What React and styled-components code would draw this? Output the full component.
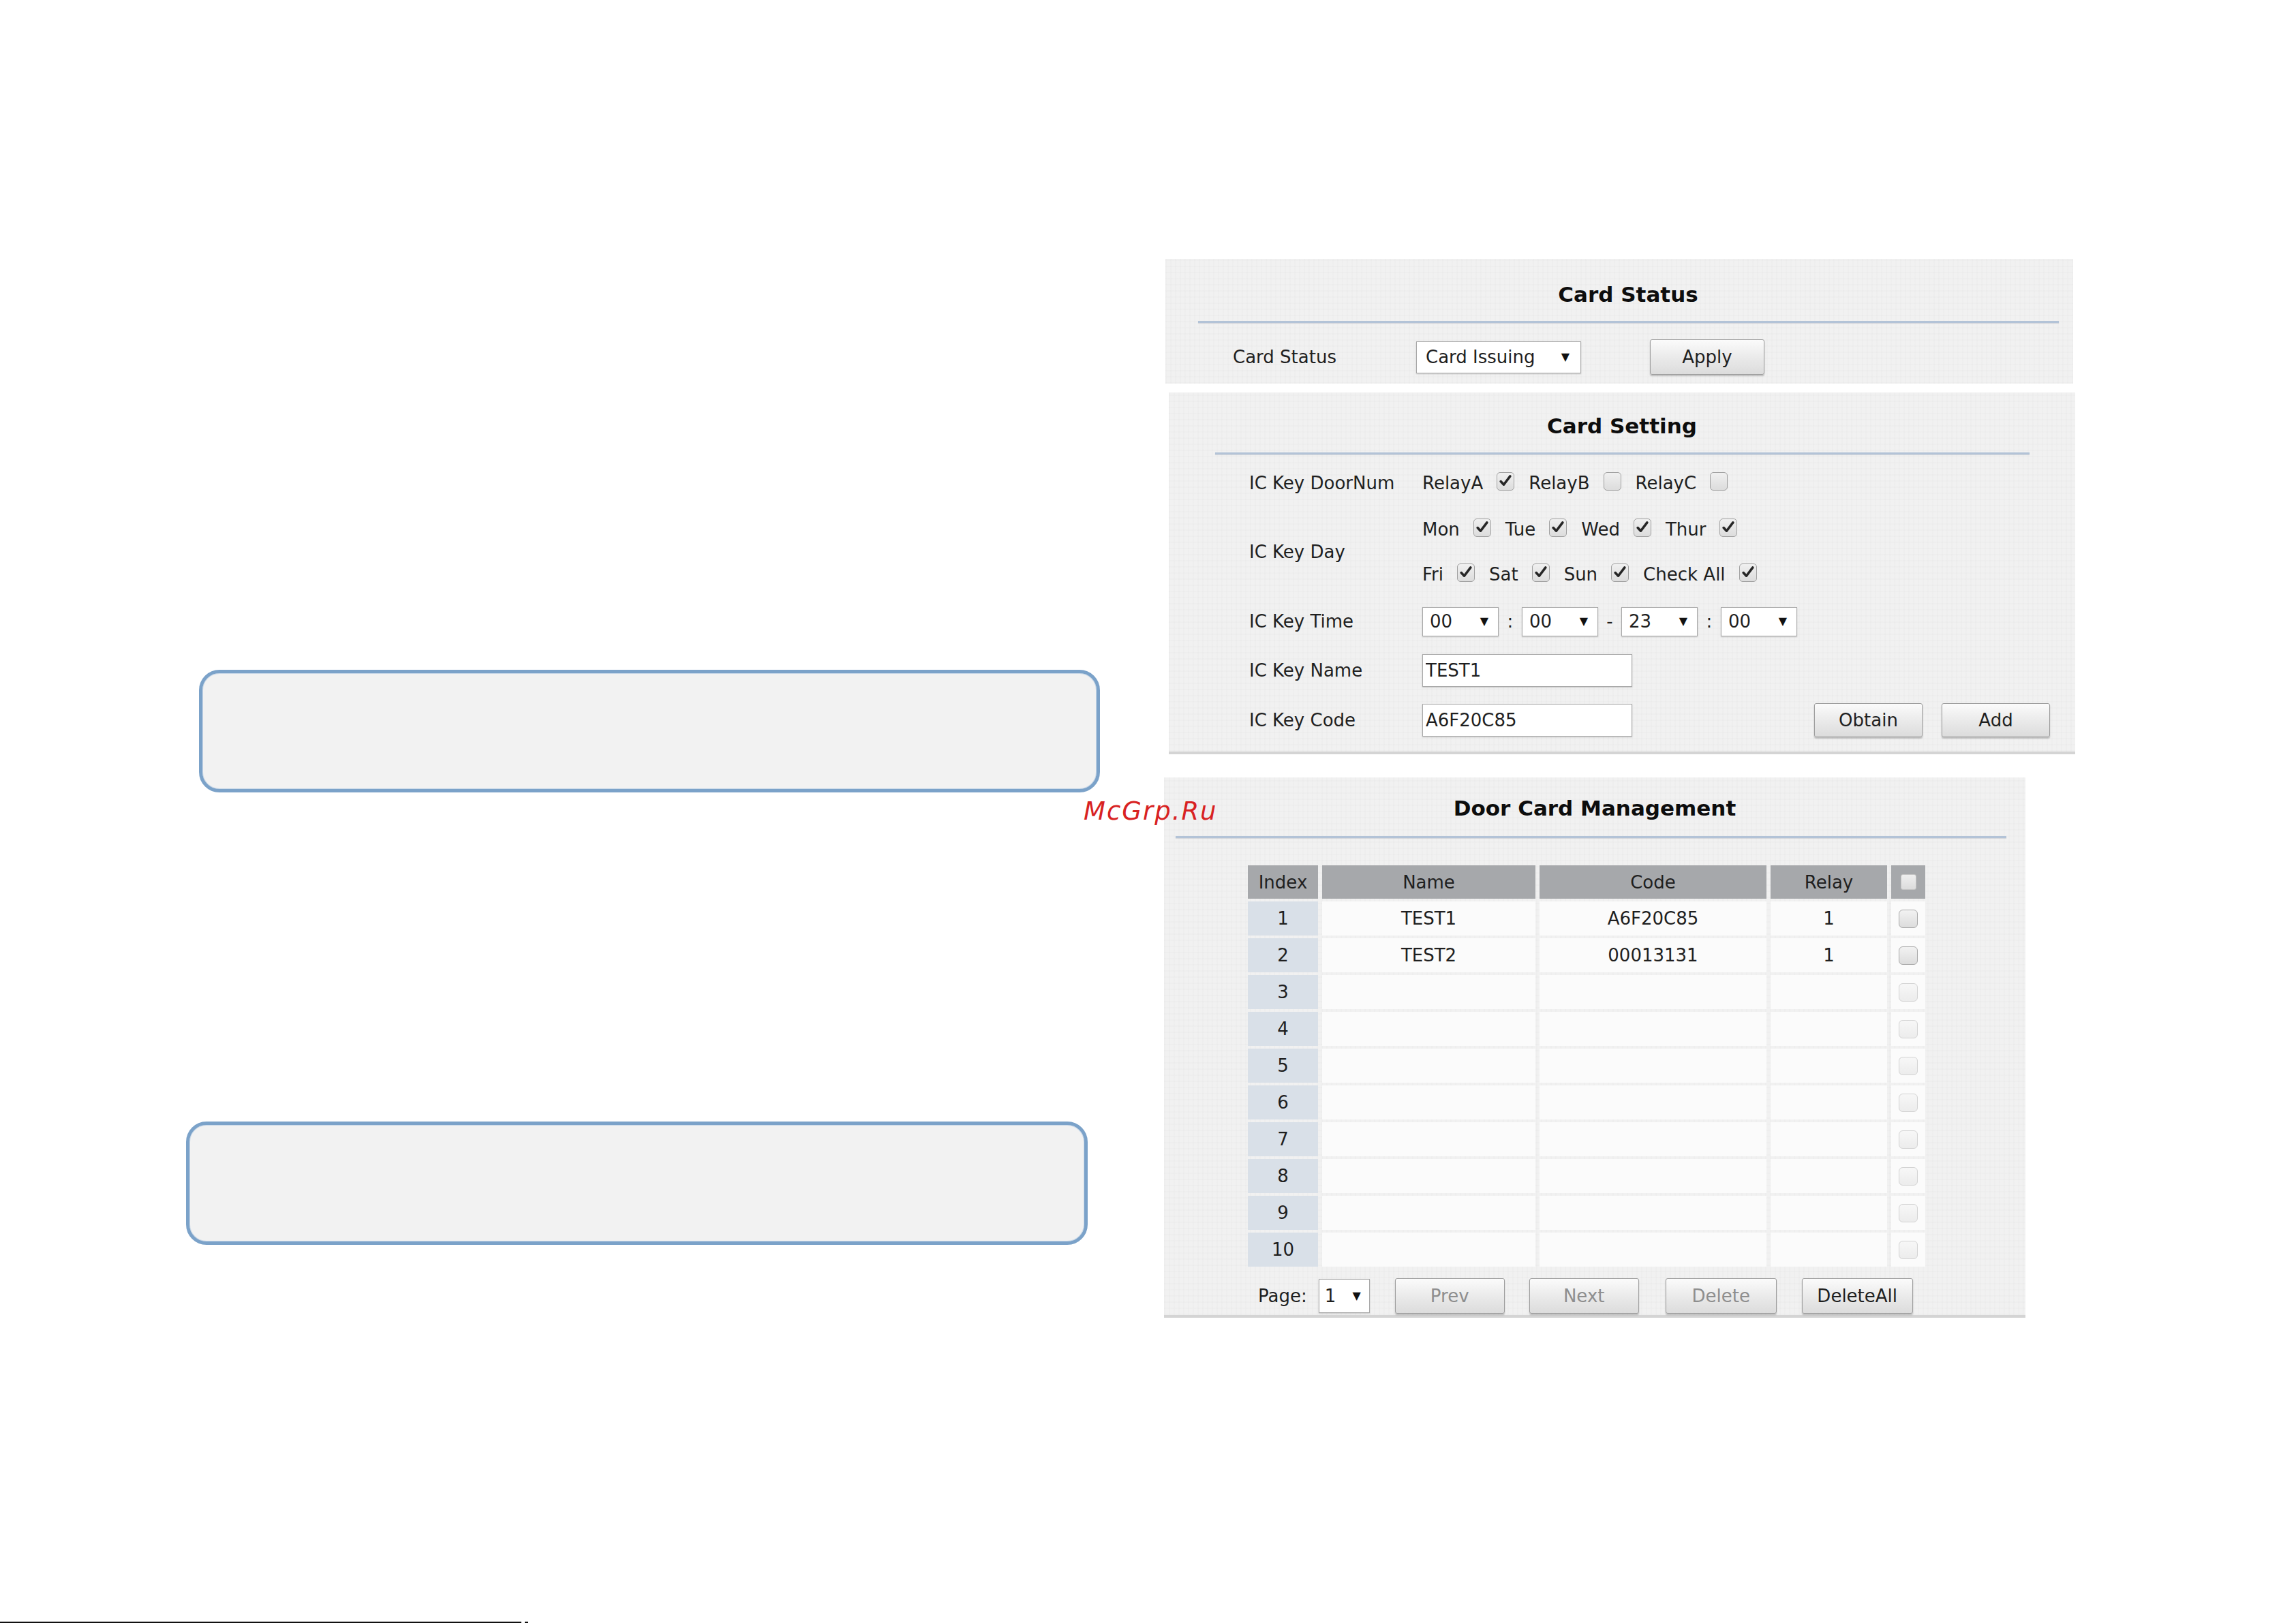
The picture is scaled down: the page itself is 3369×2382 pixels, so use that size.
import React from "react";
import styled, { createGlobalStyle } from "styled-components";

const GlobalStyle = createGlobalStyle`
  html, body { margin: 0; padding: 0; background: #ffffff; }
  body {
    font-family: "DejaVu Sans", Verdana, sans-serif;
    color: #1f1f1f;
  }
  * { box-sizing: border-box; }
`;

const Page = styled.div`
  width: 3369px;
  height: 2382px;
  position: relative;
  overflow: hidden;
  display: flex;
  flex-direction: column;
  background: #ffffff;
`;

const Main = styled.div`
  display: flex;
  padding-top: 380px;
`;

const LeftCol = styled.div`
  width: 1708px;
  flex-shrink: 0;
  display: flex;
  flex-direction: column;
`;

const NoteBox = styled.div`
  margin-top: ${(p) => p.$top}px;
  margin-left: ${(p) => p.$left}px;
  width: ${(p) => p.$w}px;
  height: ${(p) => p.$h}px;
  background: #f2f2f2;
  border: 5px solid #7ba2c9;
  border-radius: 30px;
  box-shadow: inset 0 0 0 1px #c9d8e8;
`;

const RightCol = styled.div`
  display: flex;
  flex-direction: column;
`;

const Panel = styled.section`
  width: ${(p) => p.$w}px;
  height: ${(p) => p.$h}px;
  margin-left: ${(p) => p.$ml}px;
  margin-top: ${(p) => p.$mt}px;
  padding-top: ${(p) => p.$pt}px;
  background-color: #f1f1f1;
  background-image: repeating-linear-gradient(
      90deg,
      rgba(0, 0, 0, 0.012) 0px,
      rgba(0, 0, 0, 0.012) 2px,
      transparent 2px,
      transparent 7px
    ),
    repeating-linear-gradient(
      0deg,
      rgba(0, 0, 0, 0.01) 0px,
      rgba(0, 0, 0, 0.01) 2px,
      transparent 2px,
      transparent 9px
    );
  border-bottom: ${(p) => (p.$edge ? "4px solid #d4d4d4" : "none")};
  display: flex;
  flex-direction: column;
`;

const Title = styled.h2`
  margin: 0;
  padding-left: ${(p) => p.$shift || 0}px;
  font-size: 31px;
  line-height: 40px;
  font-weight: bold;
  text-align: center;
  color: #0d0d0d;
`;

const Divider = styled.div`
  height: 3px;
  margin: ${(p) => p.$mt}px ${(p) => p.$r}px 0 ${(p) => p.$l}px;
  background: #b3c3d7;
  box-shadow: 0 1px 1px rgba(120, 130, 150, 0.25);
`;

const StatusRow = styled.div`
  display: flex;
  align-items: center;
  height: 52px;
  margin-top: 24px;
  padding-left: 99px;
  font-size: 26px;
`;

const Label = styled.div`
  width: ${(p) => p.$w}px;
  flex-shrink: 0;
  font-size: 26px;
  white-space: nowrap;
`;

const SelectBox = styled.div`
  width: ${(p) => p.$w}px;
  height: ${(p) => p.$h}px;
  margin-left: ${(p) => p.$ml || 0}px;
  flex-shrink: 0;
  background: #ffffff;
  border: 1px solid #a8a8a8;
  box-shadow: 0 1px 2px rgba(0, 0, 0, 0.18);
  display: flex;
  align-items: center;
  justify-content: space-between;
  padding: 0 ${(p) => p.$pr || 14}px 0 ${(p) => p.$pl || 12}px;
  font-size: 26px;
  white-space: nowrap;
`;

const Arrow = styled.span`
  font-size: 16px;
  line-height: 1;
  color: #111;
`;

const Button = styled.button`
  width: ${(p) => p.$w}px;
  height: ${(p) => p.$h}px;
  margin-left: ${(p) => p.$ml || 0}px;
  flex-shrink: 0;
  padding: 0;
  font-family: "DejaVu Sans", Verdana, sans-serif;
  font-size: 26px;
  color: ${(p) => (p.$dim ? "#8e8e8e" : "#1f1f1f")};
  background: linear-gradient(#fbfbfb, #e9e9e9 55%, #dcdcdc);
  border: 1px solid #9e9e9e;
  border-radius: 3px;
  box-shadow: 0 2px 2px rgba(0, 0, 0, 0.22);
  display: flex;
  align-items: center;
  justify-content: center;
`;

const Form = styled.div`
  margin-top: 7px;
  padding-left: 118px;
  padding-right: 37px;
  display: flex;
  flex-direction: column;
`;

const FormRow = styled.div`
  height: ${(p) => p.$h}px;
  display: flex;
  align-items: center;
`;

const Values = styled.div`
  display: flex;
  flex-direction: ${(p) => (p.$col ? "column" : "row")};
  align-items: ${(p) => (p.$col ? "stretch" : "center")};
  flex: 1;
`;

const CheckLine = styled.div`
  height: ${(p) => p.$h || 66}px;
  display: flex;
  align-items: center;
  gap: 21px;
  font-size: 26px;
`;

const CheckItem = styled.span`
  display: inline-flex;
  align-items: center;
  gap: 20px;
  white-space: nowrap;
`;

const Box = styled.span`
  width: ${(p) => p.$w}px;
  height: ${(p) => p.$h}px;
  flex-shrink: 0;
  display: inline-flex;
  align-items: center;
  justify-content: center;
  border-radius: ${(p) => p.$r || 5}px;
  border: 1px solid ${(p) => p.$border || "#a3a3a3"};
  background: ${(p) => p.$bg || "linear-gradient(#f3f3f3, #dedede)"};
  margin-top: ${(p) => (p.$raise ? -6 : 0)}px;
`;

const Sep = styled.span`
  width: 34px;
  text-align: center;
  font-size: 26px;
`;

const TextField = styled.input`
  width: 308px;
  height: 48px;
  padding: 0 0 0 4px;
  font-family: "DejaVu Sans", Verdana, sans-serif;
  font-size: 26px;
  color: #1f1f1f;
  background: #ffffff;
  border: 1px solid #a8a8a8;
  box-shadow: 0 1px 2px rgba(0, 0, 0, 0.18);
  outline: none;
`;

const ButtonGroup = styled.div`
  margin-left: auto;
  display: flex;
  gap: 28px;
`;

const Table = styled.table`
  align-self: flex-start;
  table-layout: fixed;
  width: 1004px;
  margin-top: 36px;
  margin-left: 117px;
  border-collapse: separate;
  border-spacing: 6px 4px;
  font-size: 26px;
`;

const HeadCell = styled.th`
  width: ${(p) => p.$w}px;
  height: 49px;
  padding: 0;
  font-weight: normal;
  background: #a6a8ab;
  color: #1f1f1f;
  text-align: center;
  vertical-align: middle;
`;

const IndexCell = styled.td`
  height: 50px;
  padding: 0;
  background: #d9e0e8;
  text-align: center;
  vertical-align: middle;
`;

const DataCell = styled.td`
  height: 50px;
  padding: 0;
  background: #fbfbfb;
  text-align: center;
  vertical-align: middle;
`;

const CheckCell = styled.td`
  height: 50px;
  padding: 0;
  background: #fbfbfb;
  vertical-align: middle;
  text-align: center;
`;

const CellInner = styled.div`
  display: flex;
  align-items: center;
  justify-content: center;
`;

const Footer = styled.div`
  display: flex;
  align-items: center;
  height: 52px;
  margin-top: 13px;
  padding-left: 138px;
  font-size: 26px;
`;

const Watermark = styled.div`
  position: absolute;
  left: 1590px;
  top: 1168px;
  font-family: "DejaVu Sans", Verdana, sans-serif;
  font-style: italic;
  font-size: 37px;
  letter-spacing: 2px;
  color: #d82222;
  line-height: 46px;
`;

const PageRule = styled.div`
  margin-top: auto;
  display: flex;
  align-items: flex-end;
  gap: 5px;
  height: 3px;
`;

const RuleLine = styled.div`
  width: ${(p) => p.$w}px;
  height: 2px;
  background: #111;
`;

const Tick = () => (
  <svg width="22" height="22" viewBox="0 0 16 16">
    <path
      d="M3 8.4 L6.2 11.8 L13 2.8"
      fill="none"
      stroke="#262626"
      strokeWidth="2.6"
      strokeLinecap="round"
      strokeLinejoin="round"
    />
  </svg>
);

const SetCheck = ({ checked }) => (
  <Box
    $w={26}
    $h={27}
    $r={5}
    $raise
    $border="#a0a0a0"
    $bg="linear-gradient(#f0f0f0, #dcdcdc)"
  >
    {checked ? <Tick /> : null}
  </Box>
);

const Item = ({ label, checked }) => (
  <CheckItem>
    {label}
    <SetCheck checked={checked} />
  </CheckItem>
);

const Select = ({ w, h, value, pl, pr, ml }) => (
  <SelectBox $w={w} $h={h} $pl={pl} $pr={pr} $ml={ml}>
    <span>{value}</span>
    <Arrow>▼</Arrow>
  </SelectBox>
);

const rows = [
  { i: 1, name: "TEST1", code: "A6F20C85", relay: "1" },
  { i: 2, name: "TEST2", code: "00013131", relay: "1" },
  { i: 3 },
  { i: 4 },
  { i: 5 },
  { i: 6 },
  { i: 7 },
  { i: 8 },
  { i: 9 },
  { i: 10 },
];

export default function App() {
  return (
    <>
      <GlobalStyle />
      <Page>
        <Main>
          <LeftCol>
            <NoteBox $top={603} $left={292} $w={1322} $h={180} />
            <NoteBox $top={483} $left={273} $w={1323} $h={181} />
          </LeftCol>

          <RightCol>
            <Panel $w={1332} $h={183} $ml={2} $mt={0} $pt={32}>
              <Title $shift={26}>Card Status</Title>
              <Divider $mt={19} $l={48} $r={21} />
              <StatusRow>
                <Label $w={269}>Card Status</Label>
                <Select w={242} h={47} value="Card Issuing" pl={13} pr={16} />
                <Button $w={168} $h={52} $ml={101}>
                  Apply
                </Button>
              </StatusRow>
            </Panel>

            <Panel $w={1330} $h={531} $ml={7} $mt={13} $pt={29} $edge>
              <Title>Card Setting</Title>
              <Divider $mt={19} $l={68} $r={67} />
              <Form>
                <FormRow $h={70}>
                  <Label $w={254}>IC Key DoorNum</Label>
                  <Values>
                    <CheckLine $h={70}>
                      <Item label="RelayA" checked />
                      <Item label="RelayB" />
                      <Item label="RelayC" />
                    </CheckLine>
                  </Values>
                </FormRow>
                <FormRow $h={132}>
                  <Label $w={254}>IC Key Day</Label>
                  <Values $col>
                    <CheckLine>
                      <Item label="Mon" checked />
                      <Item label="Tue" checked />
                      <Item label="Wed" checked />
                      <Item label="Thur" checked />
                    </CheckLine>
                    <CheckLine>
                      <Item label="Fri" checked />
                      <Item label="Sat" checked />
                      <Item label="Sun" checked />
                      <Item label="Check All" checked />
                    </CheckLine>
                  </Values>
                </FormRow>
                <FormRow $h={72}>
                  <Label $w={254}>IC Key Time</Label>
                  <Values>
                    <Select w={112} h={43} value="00" pl={10} pr={14} />
                    <Sep>:</Sep>
                    <Select w={112} h={43} value="00" pl={10} pr={14} />
                    <Sep>-</Sep>
                    <Select w={112} h={43} value="23" pl={10} pr={14} />
                    <Sep>:</Sep>
                    <Select w={112} h={43} value="00" pl={10} pr={14} />
                  </Values>
                </FormRow>
                <FormRow $h={72}>
                  <Label $w={254}>IC Key Name</Label>
                  <Values>
                    <TextField readOnly value="TEST1" />
                  </Values>
                </FormRow>
                <FormRow $h={74}>
                  <Label $w={254}>IC Key Code</Label>
                  <Values>
                    <TextField readOnly value="A6F20C85" />
                    <ButtonGroup>
                      <Button $w={159} $h={50}>
                        Obtain
                      </Button>
                      <Button $w={159} $h={50}>
                        Add
                      </Button>
                    </ButtonGroup>
                  </Values>
                </FormRow>
              </Form>
            </Panel>

            <Panel $w={1264} $h={793} $ml={0} $mt={34} $pt={25} $edge>
              <Title>Door Card Management</Title>
              <Divider $mt={21} $l={17} $r={28} />
              <Table>
                <colgroup>
                  <col style={{ width: 103 }} />
                  <col style={{ width: 313 }} />
                  <col style={{ width: 333 }} />
                  <col style={{ width: 171 }} />
                  <col style={{ width: 50 }} />
                </colgroup>
                <thead>
                  <tr>
                    <HeadCell>Index</HeadCell>
                    <HeadCell>Name</HeadCell>
                    <HeadCell>Code</HeadCell>
                    <HeadCell>Relay</HeadCell>
                    <HeadCell>
                      <CellInner>
                        <Box
                          $w={23}
                          $h={23}
                          $r={3}
                          $border="#c4c4c4"
                          $bg="linear-gradient(#efefef, #dcdcdc)"
                        />
                      </CellInner>
                    </HeadCell>
                  </tr>
                </thead>
                <tbody>
                  {rows.map((r) => (
                    <tr key={r.i}>
                      <IndexCell>{r.i}</IndexCell>
                      <DataCell>{r.name || ""}</DataCell>
                      <DataCell>{r.code || ""}</DataCell>
                      <DataCell>{r.relay || ""}</DataCell>
                      <CheckCell>
                        <CellInner>
                          <Box
                            $w={28}
                            $h={27}
                            $r={6}
                            $border={r.name ? "#a9a9a9" : "#d3d3d3"}
                            $bg={
                              r.name
                                ? "linear-gradient(#f2f2f2, #dcdcdc)"
                                : "linear-gradient(#f7f7f7, #ececec)"
                            }
                          />
                        </CellInner>
                      </CheckCell>
                    </tr>
                  ))}
                </tbody>
              </Table>
              <Footer>
                <span>Page:</span>
                <Select w={75} h={50} value="1" pl={8} pr={12} ml={17} />
                <Button $w={161} $h={52} $ml={37} $dim>
                  Prev
                </Button>
                <Button $w={161} $h={52} $ml={36} $dim>
                  Next
                </Button>
                <Button $w={163} $h={52} $ml={39} $dim>
                  Delete
                </Button>
                <Button $w={163} $h={52} $ml={37}>
                  DeleteAll
                </Button>
              </Footer>
            </Panel>
          </RightCol>
        </Main>

        <Watermark>McGrp.Ru</Watermark>

        <PageRule>
          <RuleLine $w={765} />
          <RuleLine $w={5} />
        </PageRule>
      </Page>
    </>
  );
}
